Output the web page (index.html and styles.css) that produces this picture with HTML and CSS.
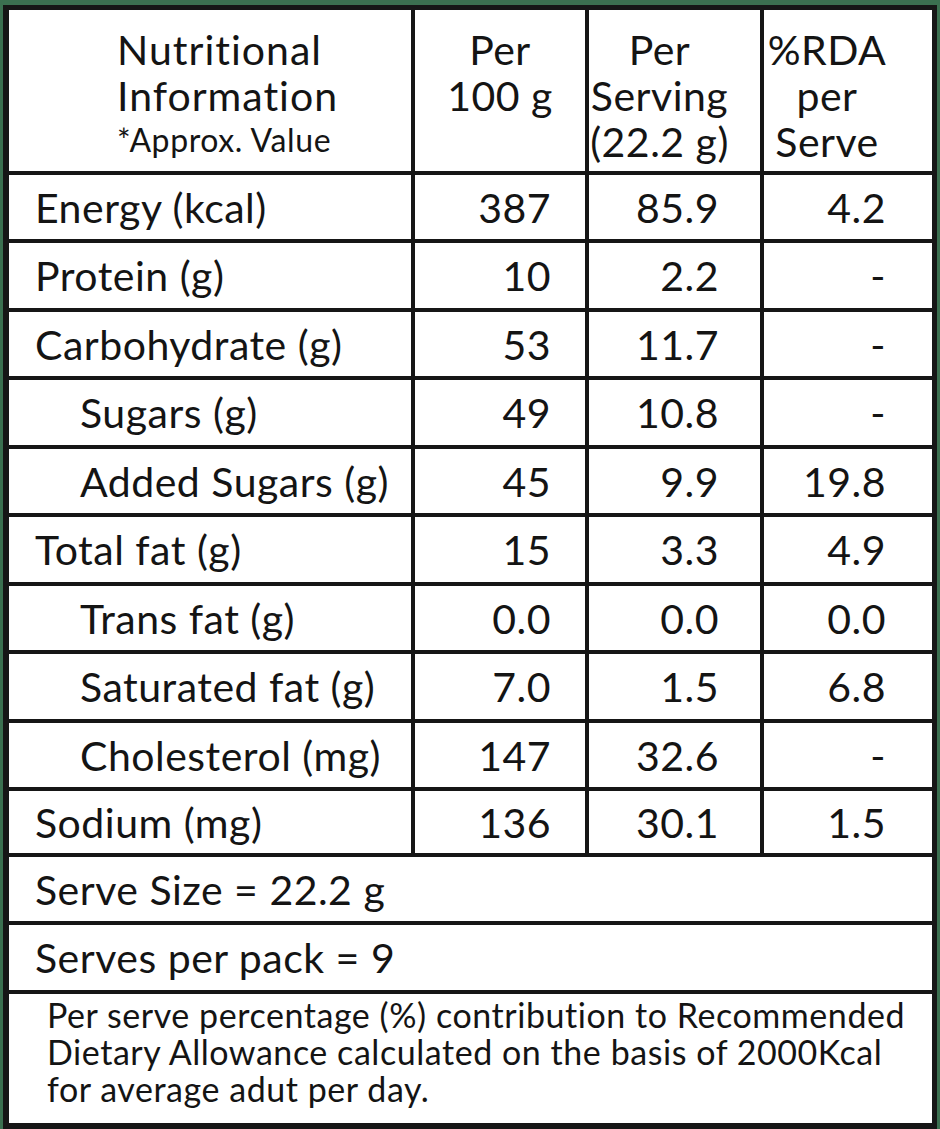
FILE: index.html
```html
<!DOCTYPE html>
<html>
<head>
<meta charset="utf-8">
<link rel="stylesheet" href="styles.css">
</head>
<body>
<div class="table">
  <div class="cell head h1">
    <div>Nutritional</div>
    <div>Information</div>
    <div class="small">*Approx. Value</div>
  </div>
  <div class="cell head h2"><div>Per</div><div>100 g</div></div>
  <div class="cell head h3"><div>Per</div><div>Serving</div><div>(22.2 g)</div></div>
  <div class="cell head h4"><div>%RDA</div><div>per</div><div>Serve</div></div>

  <div class="cell label">Energy (kcal)</div>
  <div class="cell num n2">387</div><div class="cell num n3">85.9</div><div class="cell num n4">4.2</div>

  <div class="cell label">Protein (g)</div>
  <div class="cell num n2">10</div><div class="cell num n3">2.2</div><div class="cell num n4">-</div>

  <div class="cell label">Carbohydrate (g)</div>
  <div class="cell num n2">53</div><div class="cell num n3">11.7</div><div class="cell num n4">-</div>

  <div class="cell label indent">Sugars (g)</div>
  <div class="cell num n2">49</div><div class="cell num n3">10.8</div><div class="cell num n4">-</div>

  <div class="cell label indent">Added Sugars (g)</div>
  <div class="cell num n2">45</div><div class="cell num n3">9.9</div><div class="cell num n4">19.8</div>

  <div class="cell label">Total fat (g)</div>
  <div class="cell num n2">15</div><div class="cell num n3">3.3</div><div class="cell num n4">4.9</div>

  <div class="cell label indent">Trans fat (g)</div>
  <div class="cell num n2">0.0</div><div class="cell num n3">0.0</div><div class="cell num n4">0.0</div>

  <div class="cell label indent">Saturated fat (g)</div>
  <div class="cell num n2">7.0</div><div class="cell num n3">1.5</div><div class="cell num n4">6.8</div>

  <div class="cell label indent">Cholesterol (mg)</div>
  <div class="cell num n2">147</div><div class="cell num n3">32.6</div><div class="cell num n4">-</div>

  <div class="cell label">Sodium (mg)</div>
  <div class="cell num n2">136</div><div class="cell num n3">30.1</div><div class="cell num n4">1.5</div>

  <div class="cell label span">Serve Size = 22.2 g</div>
  <div class="cell label span">Serves per pack = 9</div>
  <div class="cell note span">Per serve percentage (%) contribution to Recommended<br>Dietary Allowance calculated on the basis of 2000Kcal<br>for average adut per day.</div>
</div>
</body>
</html>
```

FILE: styles.css
```css
html, body {
  margin: 0;
  padding: 0;
  background: #3b7050;
  width: 940px;
  height: 1129px;
  overflow: hidden;
}

.table {
  margin: 5px 0 0 3px;
  width: 934px;
  box-sizing: border-box;
  background: #161616;
  padding: 5px 5px 6px 6px;
  display: grid;
  grid-template-columns: 402px 170px 171px 168px;
  grid-template-rows: 161px 64px 65px 64px 65px 64px 65px 64px 65px 64px 62px 64px 65px 129px;
  gap: 4px;
  font-family: Lato, "Open Sans", sans-serif;
  color: #141414;
}

.cell {
  background: #fff;
  display: flex;
  align-items: center;
  font-size: 41px;
  letter-spacing: 0.5px;
  white-space: nowrap;
}

.head {
  flex-direction: column;
  align-items: center;
  justify-content: flex-start;
  padding-top: 17px;
  line-height: 46px;
  box-sizing: border-box;
}

.h1 {
  align-items: flex-start;
  padding-left: 108px;
  letter-spacing: 1px;
}

.small {
  font-size: 32px;
  line-height: 42px;
  letter-spacing: 0.6px;
}

.h3 {
  padding-right: 30px;
}

.h4 {
  padding-right: 42px;
}

.label {
  padding-left: 26px;
}

.indent {
  padding-left: 71px;
}

.num {
  justify-content: flex-end;
}

.n2 { padding-right: 34px; }
.n3 { padding-right: 41px; }
.n4 { padding-right: 46px; }

.span {
  grid-column: 1 / -1;
}

.note {
  display: block;
  font-size: 34px;
  letter-spacing: 0.55px;
  line-height: 37px;
  padding: 2px 10px 0 38px;
}
```
